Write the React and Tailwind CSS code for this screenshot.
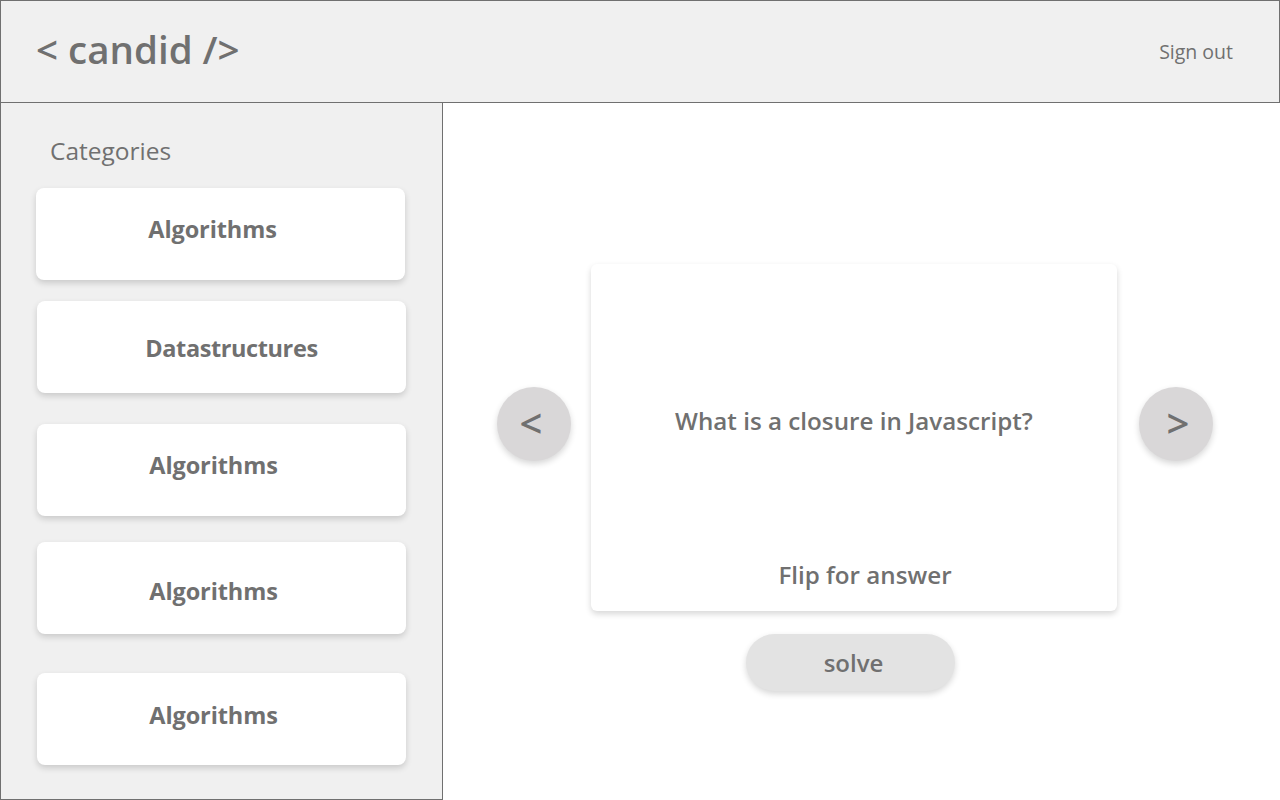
import React from "react";

const font = { fontFamily: "'Open Sans', 'Noto Sans', sans-serif" };

function CatCard({ label, className = "", textClass = "" }) {
  return (
    <div
      className={`w-[369px] h-[92px] bg-white rounded-[8px] shadow-[0_3px_6px_rgba(0,0,0,0.16)] flex items-center justify-center ${className}`}
    >
      <span className={`text-[23.5px] font-bold text-[#707070] tracking-[-0.1px] ${textClass}`}>{label}</span>
    </div>
  );
}

export default function App() {
  return (
    <div className="w-[1280px] h-[800px] bg-white flex flex-col overflow-hidden" style={font}>
      <header className="h-[103px] shrink-0 bg-[#f0f0f0] border border-[#707070] flex items-center justify-between pl-[35px] pr-[46px]">
        <div className="text-[38.5px] font-semibold text-[#707070] -mt-[4px]">&lt; candid /&gt;</div>
        <div className="text-[19.5px] text-[#707070] mt-[1px]">Sign out</div>
      </header>
      <div className="flex flex-1 min-h-0">
        <aside className="w-[443px] shrink-0 bg-[#f0f0f0] border-l border-r border-b border-[#707070] pl-[35px] flex flex-col">
          <div className="text-[24.5px] font-medium text-[#707070] pl-[14px] pt-[34px] leading-[28px]">Categories</div>
          <CatCard label="Algorithms" className="mt-[23px]" textClass="mr-[16px] -mt-[9px]" />
          <CatCard label="Datastructures" className="mt-[21px] ml-[1px]" textClass="ml-[20px] mt-[3px] tracking-[-0.4px]" />
          <CatCard label="Algorithms" className="mt-[31px] ml-[1px]" textClass="mr-[16px] -mt-[8px]" />
          <CatCard label="Algorithms" className="mt-[26px] ml-[1px]" textClass="mr-[16px] mt-[7px]" />
          <CatCard label="Algorithms" className="mt-[39px] ml-[1px]" textClass="mr-[16px] -mt-[7px]" />
        </aside>
        <main className="flex-1 flex flex-col pl-[54px] pt-[161px]">
          <div className="flex items-start">
            <button className="mt-[123px] w-[74px] h-[74px] rounded-full bg-[#d9d7d8] shadow-[0_3px_6px_rgba(0,0,0,0.16)] flex items-center justify-center text-[40px] text-[#707070] font-semibold leading-none">
              <span className="-ml-[6px] -mt-[2px]">&lt;</span>
            </button>
            <div className="ml-[20px] w-[526px] h-[347px] bg-white rounded-[6px] shadow-[0_3px_6px_rgba(0,0,0,0.16)] flex flex-col items-center">
              <div className="mt-[142px] text-[24.2px] font-semibold text-[#707070] leading-[30px]">What is a closure in Javascript?</div>
              <div className="mt-[124px] ml-[22px] text-[24.2px] font-semibold text-[#707070] leading-[30px]">Flip for answer</div>
            </div>
            <button className="ml-[22px] mt-[123px] w-[74px] h-[74px] rounded-full bg-[#d9d7d8] shadow-[0_3px_6px_rgba(0,0,0,0.16)] flex items-center justify-center text-[40px] text-[#707070] font-semibold leading-none">
              <span className="ml-[4px] -mt-[2px]">&gt;</span>
            </button>
          </div>
          <div className="ml-[249px] mt-[23px] w-[209px] h-[57px] rounded-full bg-[#e3e3e3] shadow-[0_3px_6px_rgba(0,0,0,0.16)] flex items-center justify-center text-[24px] font-semibold text-[#707070]">
            <span className="ml-[6px]">solve</span>
          </div>
        </main>
      </div>
    </div>
  );
}
